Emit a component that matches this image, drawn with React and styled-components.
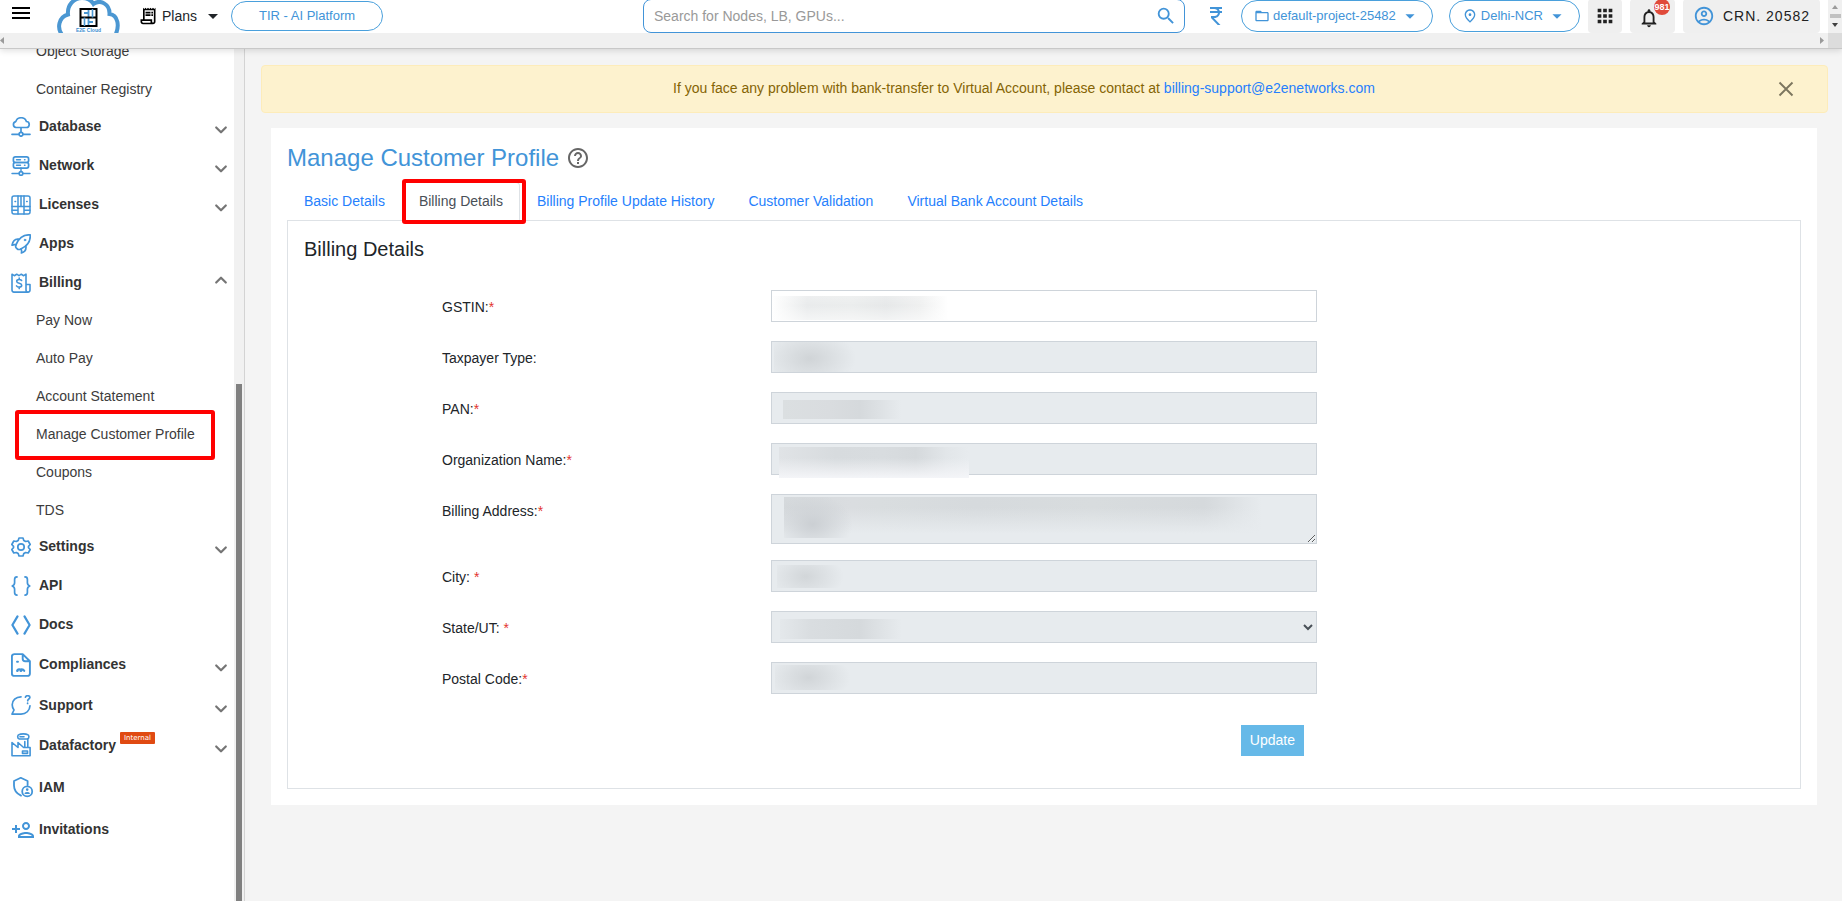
import React, { useState } from 'react';
import styled, { createGlobalStyle } from 'styled-components';
import {
  MdMenu,
  MdOutlineReceiptLong,
  MdArrowDropDown,
  MdSearch,
  MdCurrencyRupee,
  MdFolderOpen,
  MdOutlinePlace,
  MdApps,
  MdNotificationsNone,
  MdOutlineAccountCircle,
  MdHelpOutline,
  MdOutlinePersonAdd,
} from 'react-icons/md';

const blue = '#4294d8';
const link = '#267ffd';

const GlobalStyle = createGlobalStyle`
  * {
    box-sizing: border-box;
  }
  body {
    margin: 0;
    background: #f4f4f4;
    color: #212529;
    font-family: "Liberation Sans", Arial, sans-serif;
    font-size: 14px;
    line-height: 21px;
  }
  button, input, textarea, select {
    font: inherit;
  }
  svg {
    display: block;
    flex: none;
  }
`;

const Page = styled.div`
  display: flex;
  flex-direction: column;
  height: 100vh;
  overflow: hidden;
`;

/* ---------- top bar ---------- */

const TopBar = styled.header`
  position: relative;
  z-index: 1;
  background: #f0f0f0;
  border-bottom: 1px solid #c8c8c8;
  box-shadow: 0 2px 6px rgba(0, 0, 0, 0.12);
`;

const TopRow = styled.div`
  display: flex;
`;

const TopContent = styled.div`
  flex: 1;
  display: flex;
  align-items: center;
  height: 33px;
  padding: 0 8px 1px 9px;
  background: #fff;
  overflow: hidden;
`;

const IconButton = styled.button`
  display: flex;
  align-items: center;
  padding: 0;
  border: 0;
  background: none;
  color: ${(props) => props.$color || '#000'};
`;

const MenuButton = styled(IconButton)`
  margin-bottom: 6px;
`;

const LogoLink = styled.a`
  margin-left: 24px;
  align-self: flex-start;
`;

const PlansButton = styled(IconButton)`
  margin: 0 6px 0 15px;
  color: #212529;

  svg:first-child {
    margin-right: 4px;
    color: #000;
  }
  svg:last-child {
    margin-left: 4px;
  }
`;

const Pill = styled.button`
  display: flex;
  flex: none;
  align-items: center;
  height: ${(props) => props.$height || 32}px;
  padding: ${(props) => props.$padding || '0 11px 1px 12px'};
  border: 1px solid #4aa0dc;
  border-radius: 16px;
  background: #fff;
  color: ${blue};
  font-size: 13px;
  line-height: 20px;
  white-space: nowrap;

  svg:first-child {
    margin-right: 3px;
  }
  svg:last-child {
    margin-left: 3px;
  }
`;

const SearchBox = styled.label`
  display: flex;
  flex: 0 1 542px;
  align-items: center;
  height: 34px;
  margin-left: auto;
  padding: 0 7px 0 10px;
  border: 1px solid ${blue};
  border-radius: 8px;
  color: ${blue};
`;

const SearchInput = styled.input`
  flex: 1;
  min-width: 0;
  padding: 0;
  border: 0;
  outline: 0;
  background: none;

  &::placeholder {
    color: #999;
  }
`;

const TopActions = styled.div`
  display: flex;
  flex: none;
  align-items: center;
  gap: 8px;
  margin-left: 19px;
`;

const PillGroup = styled.div`
  display: flex;
  gap: 16px;
  margin-left: 5px;
`;

const GreyButton = styled.button`
  position: relative;
  display: flex;
  align-items: center;
  justify-content: center;
  gap: 8px;
  height: 34px;
  padding: ${(props) => props.$padding};
  border: 0;
  border-radius: 4px;
  background: #efefef;
  color: #212121;
  letter-spacing: 1px;
  white-space: nowrap;

  svg {
    color: ${(props) => props.$iconColor || '#212121'};
  }
`;

const Count = styled.span`
  position: absolute;
  top: 0;
  right: 5px;
  width: 16px;
  height: 16px;
  border-radius: 8px;
  background: #e04a3a;
  color: #fff;
  font-size: 9px;
  font-weight: bold;
  line-height: 16px;
  letter-spacing: 0;
  text-align: center;
`;

const VerticalBar = styled.div`
  display: flex;
  flex-direction: column;
  align-items: center;
  justify-content: space-between;
  width: 14px;
  padding: 5px 0 6px;
  background: #f0f0f0;
`;

const VerticalThumb = styled.div`
  width: 11px;
  height: 4px;
  background: #c1c1c1;
`;

const HorizontalBar = styled.div`
  display: flex;
  align-items: center;
  justify-content: space-between;
  height: 15px;
`;

const Corner = styled.div`
  width: 14px;
  height: 15px;
  margin-left: 4px;
  background: #dcdcdc;
`;

const RightArrow = styled.div`
  display: flex;
  align-items: center;
`;

/* ---------- side bar ---------- */

const Body = styled.div`
  display: flex;
  flex: 1;
  min-height: 0;
`;

const SideBar = styled.aside`
  display: flex;
  flex: none;
  width: 245px;
  background: #fff;
  border-right: 1px solid #d3d3d3;
  overflow: hidden;
`;

const SideNav = styled.nav`
  flex: 1;
  margin-top: -16px;
`;

const SideTrack = styled.div`
  width: 10px;
  padding: 335px 2px 0;
  background: #f1f1f1;
`;

const SideThumb = styled.div`
  height: 100%;
  background: #808080;
`;

const NavRow = styled.a`
  display: flex;
  align-items: center;
  height: ${(props) => props.$height || 39}px;
  padding: 0 2px 0 11px;
  color: #333;
  font-weight: bold;
  text-decoration: none;
`;

const NavIcon = styled.span`
  width: 28px;
  color: ${blue};
`;

const NavArrow = styled.span`
  margin-left: auto;
  padding-top: ${(props) => (props.$open ? 0 : 7)}px;
  padding-bottom: ${(props) => (props.$open ? 5 : 0)}px;
  color: #757575;
`;

const InternalTag = styled.span`
  align-self: flex-start;
  margin: 7px 0 0 4px;
  padding: 0 4px;
  border-radius: 1px;
  background: #e04a12;
  color: #fff;
  font-family: "DejaVu Sans", sans-serif;
  font-size: 7px;
  line-height: 12px;
  font-weight: normal;
`;

const SubNav = styled.div`
  display: flex;
  flex-direction: column;
  gap: 1px;
  margin-bottom: ${(props) => props.$tail || 0}px;
`;

const SubLink = styled.a`
  position: relative;
  height: 37px;
  padding-left: 36px;
  color: #3c3c3c;
  line-height: 37px;
  text-decoration: none;
`;

const Highlight = styled.span`
  position: absolute;
  inset: ${(props) => props.$inset};
  border: 4px solid #f00;
  border-radius: 3px;
  pointer-events: none;
`;

/* ---------- content ---------- */

const Main = styled.main`
  flex: 1;
  min-width: 0;
  padding: 16px 14px 0 16px;
`;

const Notice = styled.div`
  display: flex;
  align-items: center;
  height: 48px;
  padding: 0 33px;
  border: 1px solid #fdecba;
  border-radius: 4px;
  background: #fdf2ce;
  color: #856404;
`;

const NoticeText = styled.p`
  flex: 1;
  margin: 0;
  padding: 0 25px 1px 0;
  text-align: center;

  a {
    color: ${link};
    text-decoration: none;
  }
`;

const Card = styled.section`
  margin: 15px 11px 0 10px;
  padding: 16px;
  background: #fff;
`;

const TitleRow = styled.div`
  display: flex;
  align-items: center;
  gap: 7px;
  height: 27px;
  color: #666;
`;

const Title = styled.h1`
  margin: 0;
  color: ${blue};
  font-size: 24px;
  font-weight: normal;
  line-height: 29px;
`;

const Tabs = styled.div`
  display: flex;
  margin-top: 11px;
  border-bottom: 1px solid #dee2e6;
`;

const Tab = styled.button`
  position: relative;
  height: 39px;
  margin-bottom: -1px;
  padding: 0 16px;
  border: 1px solid ${(props) => (props.$active ? '#dee2e6' : 'transparent')};
  border-bottom-color: ${(props) => (props.$active ? '#fff' : 'transparent')};
  border-radius: 4px 4px 0 0;
  background: ${(props) => (props.$active ? '#fff' : 'none')};
  color: ${(props) => (props.$active ? '#495057' : link)};
`;

const Pane = styled.div`
  padding: 16px 16px 32px;
  border: 1px solid #dee2e6;
  border-top: 0;
`;

const PaneTitle = styled.h2`
  margin: 0 0 29px;
  font-size: 20px;
  font-weight: normal;
  line-height: 24px;
`;

const Form = styled.form`
  width: 100%;
  max-width: 1013px;
  padding-left: 138px;
`;

const Field = styled.div`
  display: grid;
  grid-template-columns: 329px 1fr;
  margin-bottom: ${(props) => props.$after || 19}px;
`;

const FieldLabel = styled.label`
  padding-top: 7px;
`;

const Required = styled.span`
  color: #e3342f;
`;

const Control = styled.div`
  position: relative;
  display: flex;
`;

const Input = styled.input`
  width: 100%;
  height: 32px;
  padding: 4px 8px;
  border: 1px solid #ced4da;
  border-radius: 0;
  background: ${(props) => (props.disabled ? '#e7ebee' : '#fff')};
  color: #495057;
  opacity: 1;
`;

const TextArea = styled(Input)`
  height: 50px;
  resize: vertical;
`;

const Select = styled(Input)`
  padding: 4px;
`;

/* soft patch that hides a private value */
const Smudge = styled.span`
  position: absolute;
  top: ${(props) => props.$box[0]}px;
  left: ${(props) => props.$box[1]}px;
  width: ${(props) => props.$box[2]}px;
  height: ${(props) => props.$box[3]}px;
  background: ${(props) => props.$fill};
  pointer-events: none;
`;

const FormActions = styled.div`
  display: flex;
  justify-content: flex-end;
  padding: 12px 13px 0 0;
`;

const UpdateButton = styled.button`
  height: 31px;
  padding: 0 9px;
  border: 0;
  background: #66b9e8;
  color: #fff;
`;

/* ---------- drawings ---------- */

const Line = ({ children, size = 20, box = '0 0 20 20', width = 1.7 }) => (
  <svg
    width={size}
    height={size}
    viewBox={box}
    fill="none"
    stroke="currentColor"
    strokeWidth={width}
    strokeLinecap="round"
    strokeLinejoin="round"
  >
    {children}
  </svg>
);

const Chevron = ({ up }) => (
  <Line size={22} box="0 0 22 22" width={2.2}>
    <path d={up ? 'M6.200 13.500 11 8.700l4.800 4.800' : 'M6.200 8.500 11 13.300l4.800-4.800'} />
  </Line>
);

const DatabaseIcon = () => (
  <Line>
    <path d="M5 10.5h10a3 3 0 0 0 .4-6A5.6 5.6 0 0 0 4.8 4.6 3 3 0 0 0 5 10.5zM10 10.5V15M1 17.3h7M12 17.3h7" />
    <circle cx="10" cy="17.3" r="1.9" />
  </Line>
);

const NetworkIcon = () => (
  <Line>
    <rect x="2.4" y="0.9" width="15.2" height="5.6" rx="2" />
    <rect x="2.4" y="6.5" width="15.2" height="5.6" rx="2" />
    <path d="M5.5 3.7h4M13.5 3.7h.5M5.5 9.3h4M13.5 9.3h.5M10 12v3.3M1 17.5h7M12 17.5h7" strokeWidth="1.4" />
    <circle cx="10" cy="17.5" r="1.8" />
  </Line>
);

const LicensesIcon = () => (
  <Line width={1.5}>
    <rect x="1" y="1" width="18" height="18" rx="2" />
    <path d="M7 1v18M13 1v18M1 11.5h18M1 15.2h6M13 15.2h6M4 6.6h.6M15.6 6.6h.6M10 1v10" />
  </Line>
);

const RocketIcon = () => (
  <Line>
    <path d="M19.2.9c-6-.5-11 2.3-14 9.4-.8 1.7-.9 2.6 0 3.6l1 1c.9.9 2 .8 3.6 0 7-3.2 9.9-7.8 9.4-14z" />
    <path d="M7.6 5.2C4.6 4.8 2 6.6 1 11.2c1.4-.7 2.7-.8 4-.5M14.9 12.4c.4 3-1.4 5.6-4.5 6.6.4-1.4.3-2.7-.4-4" />
    <circle cx="14" cy="6" r="0.9" fill="currentColor" strokeWidth="0.6" />
  </Line>
);

const BillingIcon = () => (
  <Line width={1.6}>
    <path d="M15 19.1H3a2 2 0 0 1-2-2V1.2l2.3 1.5 2.400-1.5L8 2.7l2.3-1.5 2.4 1.5L15 1.2v15.9a2 2 0 0 0 4 0V11.5h-4M15 19.1h2" />
    <path d="M10.6 7.5C10 6.7 9 6.5 8.1 6.5c-1.4 0-2.4.7-2.4 1.8 0 2.7 5 1.2 5 3.9 0 1.2-1.1 1.9-2.5 1.9-1.1 0-2.1-.3-2.7-1.2M8.2 5v1.5M8.2 14.1v1.5" />
  </Line>
);

const GearIcon = () => (
  <Line>
    <path d="M8 1h4l.8 2.4 1.9 1.1 2.5-.5 2 3.5-1.7 1.8v1.4l1.7 1.8-2 3.5-2.5-.5-1.9 1.1L12 19H8l-.8-2.4-1.9-1.1-2.5.5-2-3.5 1.7-1.8V9.3L.8 7.5l2-3.5 2.5.5 1.9-1.1z" />
    <circle cx="10" cy="10" r="3.2" />
  </Line>
);

const BracesIcon = () => (
  <Line>
    <path d="M6 .9C3.9.9 3.600 2 3.6 3.5v3.3c0 1.7-.8 2.6-2.4 3.2 1.6.6 2.4 1.5 2.4 3.2v3.3c0 1.5.3 2.6 2.4 2.6M14 .9c2.1 0 2.4 1.1 2.4 2.6v3.3c0 1.7.8 2.6 2.4 3.2-1.6.6-2.4 1.5-2.4 3.2v3.3c0 1.5-.3 2.6-2.4 2.6" />
  </Line>
);

const DocsIcon = () => (
  <Line width={2.2}>
    <path d="M6.5 1.4 1.4 10l5.1 8.6M13.5 1.4l5.1 8.6-5.1 8.6" />
  </Line>
);

const ComplianceIcon = () => (
  <Line size={24} box="0 0 24 24" width={1.9}>
    <path d="M11.7 1.1H3.4A2.5 2.5 0 0 0 .9 3.6v16.8a2.5 2.5 0 0 0 2.5 2.5h13a2.5 2.5 0 0 0 2.5-2.5V8.2zM11.7 1.1v4.6a2.5 2.5 0 0 0 2.5 2.5h4.7M6 8.7h1" />
    <path d="M6.2 17.400c.8-.9 2-1.2 3.2-.8 1.4-.4 3.2.2 3.8 1.2M6.2 18h.3M9.5 17.8h.8" strokeWidth="2.2" />
  </Line>
);

const SupportIcon = () => (
  <Line>
    <path d="M10 1.8C4.8 1.8 1.2 5.3 1.2 9.8c0 2 .6 3.6 1.8 5.2l-2 4.1h9c5 0 8.8-3.5 9-8.3" />
    <path d="M14.4 2.2c.3-1 1.1-1.5 2.2-1.5 1.3 0 2.3.7 2.3 1.8 0 1.5-2.2 1.5-2.2 3.2M16.6 8.2v.2" />
  </Line>
);

const FactoryIcon = () => (
  <Line size={24} box="0 0 24 24" width={1.6}>
    <path d="M1 22.8V9.5l6 5V9.5l5.6 5h6.5v8.3zM13.8 14V8.5M16.8 14V6M11.5 18h5v2.4h-5z" />
    <path d="M8.3 6a2.3 2.3 0 0 1 0-4.4c1-1 7-1 8 0a2.3 2.3 0 0 1 0 4.4zM9 3.8h4" />
  </Line>
);

const ShieldIcon = () => (
  <Line size={24} box="0 -1 24 24" width={1.8}>
    <path d="M10 19.6C5.5 17.5 3 14 3 9.5V5l6.800-3.2L16.6 5v4" />
    <circle cx="16.2" cy="15.4" r="5" />
    <circle cx="16.2" cy="13.6" r="0.7" strokeWidth="1.3" />
    <path d="M14.2 17.4c.6-1 3.4-1 4 0z" strokeWidth="1.3" />
  </Line>
);

const CloseIcon = () => (
  <svg width="16" height="16" viewBox="0 0 16 16" stroke="#7c765f" strokeWidth="1.9">
    <path d="M1.5 1.5l13 13M14.5 1.5l-13 13" />
  </svg>
);

const Logo = () => (
  <svg width="66" height="33" viewBox="0 0 66 33" fill="none">
    <path
      d="M6 36C-1 28 2 17 11 14.5 10 5 17-2 25-2c6 0 9 2 11.5 6C43-1 53 4 52.5 14 61 15 63 26 58 36"
      stroke="#4b97d2"
      strokeWidth="4"
    />
    <path d="M31.5 9v17M27 13h4.5M31.5 22h4.5" stroke="#4b97d2" strokeWidth="1.8" />
    <path d="M23.5 9h16v17h-16zM23.5 17.5h16" stroke="#000" strokeWidth="2" />
    <path d="M35.5 9v8.5M27.5 17.5V26" stroke="#4b97d2" strokeWidth="1.6" />
    <text x="31.5" y="32" fill="#3c8fd0" fontSize="5" fontWeight="bold" textAnchor="middle">
      E2E Cloud
    </text>
  </svg>
);

const Arrow = ({ points, fill = '#9a9a9a', size = '8 5' }) => {
  const [width, height] = size.split(' ');
  return (
    <svg width={width} height={height}>
      <polygon points={points} fill={fill} />
    </svg>
  );
};

/* ---------- data ---------- */

const menu = [
  { label: 'Database', icon: <DatabaseIcon />, arrow: true },
  { label: 'Network', icon: <NetworkIcon />, arrow: true },
  { label: 'Licenses', icon: <LicensesIcon />, arrow: true },
  { label: 'Apps', icon: <RocketIcon /> },
  {
    label: 'Billing',
    icon: <BillingIcon />,
    arrow: true,
    items: ['Pay Now', 'Auto Pay', 'Account Statement', 'Manage Customer Profile', 'Coupons', 'TDS'],
  },
  { label: 'Settings', icon: <GearIcon />, arrow: true },
  { label: 'API', icon: <BracesIcon /> },
  { label: 'Docs', icon: <DocsIcon /> },
  { label: 'Compliances', icon: <ComplianceIcon />, arrow: true, height: 41 },
  { label: 'Support', icon: <SupportIcon />, arrow: true, height: 40 },
  { label: 'Datafactory', icon: <FactoryIcon />, arrow: true, tag: 'Internal', height: 40 },
  { label: 'IAM', icon: <ShieldIcon />, height: 44 },
  { label: 'Invitations', icon: <MdOutlinePersonAdd size={24} />, height: 41 },
];

const tabs = [
  'Basic Details',
  'Billing Details',
  'Billing Profile Update History',
  'Customer Validation',
  'Virtual Bank Account Details',
];

const spot = (at, size, color) =>
  `radial-gradient(ellipse ${size} at ${at}, ${color}, transparent)`;

const fields = [
  {
    id: 'gstin',
    label: 'GSTIN:',
    required: true,
    enabled: true,
    box: [6, 1, 176, 24],
    fill: 'linear-gradient(180deg, rgba(255, 255, 255, 0.2), transparent 40%, rgba(255, 255, 255, 0.5)), linear-gradient(90deg, #fff, #e9ebec 20%, #ebeded 45%, #e6e8e9 65%, #eff0f0 84%, #fff)',
  },
  {
    id: 'taxpayer',
    label: 'Taxpayer Type:',
    box: [1, 3, 90, 30],
    fill: spot('40% 55%', '46px 28px', '#d0d4d7'),
  },
  {
    id: 'pan',
    label: 'PAN:',
    required: true,
    box: [8, 12, 118, 19],
    fill: 'linear-gradient(90deg, #dbdfe1, #d9dcdf 40%, #d5d9dc 65%, #dde1e4 82%, #e7ebee)',
  },
  {
    id: 'org',
    label: 'Organization Name:',
    required: true,
    box: [4, 8, 190, 31],
    fill: `linear-gradient(180deg, transparent 35%, #f4f5f8), linear-gradient(90deg, #e0e3e6, #d7dbde 30%, #d8dcdf 55%, #d5d9dc 72%, #e2e6e9 88%, #e7ebee)`,
  },
  {
    id: 'address',
    label: 'Billing Address:',
    required: true,
    type: 'textarea',
    after: 16,
    box: [3, 13, 478, 41],
    fill: `${spot('6% 66%', '40px 30px', '#cbcfd3')}, linear-gradient(180deg, transparent 25%, #e7ebee 90%), linear-gradient(90deg, #d5d9dc, #dadde0 14%, #d9dddf 20%, #d6dadd 40%, #d8dcde 65%, #d5d9dc 88%, #e7ebee)`,
  },
  {
    id: 'city',
    label: 'City: ',
    required: true,
    box: [5, 6, 80, 23],
    fill: `${spot('36% 50%', '38px 24px', '#d2d6d9')}`,
  },
  {
    id: 'state',
    label: 'State/UT: ',
    required: true,
    type: 'select',
    box: [8, 9, 122, 20],
    fill: 'linear-gradient(90deg, #e4e8eb, #d9dde0 25%, #d5d9dc 65%, #e0e4e7 86%, #e7ebee)',
  },
  {
    id: 'postal',
    label: 'Postal Code:',
    required: true,
    box: [3, 4, 86, 25],
    fill: `${spot('39% 50%', '42px 26px', '#d1d5d8')}`,
  },
];

const controls = { textarea: TextArea, select: Select };

const FormField = ({ field }) => {
  const Widget = controls[field.type] || Input;
  return (
    <Field $after={field.after}>
      <FieldLabel htmlFor={field.id}>
        {field.label}
        {field.required && <Required>*</Required>}
      </FieldLabel>
      <Control>
        <Widget as={field.type} id={field.id} disabled={!field.enabled} />
        <Smudge $box={field.box} $fill={field.fill} />
      </Control>
    </Field>
  );
};

const Header = () => (
  <TopBar>
    <TopRow>
      <TopContent>
        <MenuButton aria-label="Menu">
          <MdMenu size={24} />
        </MenuButton>
        <LogoLink href="#" aria-label="Home">
          <Logo />
        </LogoLink>
        <PlansButton>
          <MdOutlineReceiptLong size={20} />
          Plans
          <MdArrowDropDown size={24} />
        </PlansButton>
        <Pill $height={30} $padding="0 27px">TIR - AI Platform</Pill>
        <SearchBox>
          <SearchInput aria-label="Search" placeholder="Search for Nodes, LB, GPUs..." />
          <MdSearch size={22} />
        </SearchBox>
        <TopActions>
          <IconButton $color={blue} aria-label="Balance">
            <MdCurrencyRupee size={24} />
          </IconButton>
          <PillGroup>
            <Pill>
              <MdFolderOpen size={16} />
              default-project-25482
              <MdArrowDropDown size={22} />
            </Pill>
            <Pill>
              <MdOutlinePlace size={16} />
              Delhi-NCR
              <MdArrowDropDown size={22} />
            </Pill>
          </PillGroup>
          <GreyButton $padding="0 6px" aria-label="Apps">
            <MdApps size={22} />
          </GreyButton>
          <GreyButton $padding="4px 15px 0 8px" aria-label="Notifications">
            <MdNotificationsNone size={22} />
            <Count>981</Count>
          </GreyButton>
          <GreyButton $padding="0 10px" $iconColor={blue}>
            <MdOutlineAccountCircle size={22} />
            CRN. 20582
          </GreyButton>
        </TopActions>
      </TopContent>
      <VerticalBar>
        <Arrow points="0,4 6,4 3,0" size="6 4" />
        <VerticalThumb />
        <Arrow points="0,0 6,0 3,4" size="6 4" fill="#404040" />
      </VerticalBar>
    </TopRow>
    <HorizontalBar>
      <Arrow points="4,0 4,7 0,3.5" size="4 7" />
      <RightArrow>
        <Arrow points="0,0 0,7 4,3.5" size="4 7" />
        <Corner />
      </RightArrow>
    </HorizontalBar>
  </TopBar>
);

const SideMenu = () => (
  <SideBar>
    <SideNav>
      <SubNav $tail={-1}>
        <SubLink href="#">Object Storage</SubLink>
        <SubLink href="#">Container Registry</SubLink>
      </SubNav>
      {menu.map((entry) => (
        <React.Fragment key={entry.label}>
          <NavRow href="#" $height={entry.height}>
            <NavIcon>{entry.icon}</NavIcon>
            {entry.label}
            {entry.tag && <InternalTag>{entry.tag}</InternalTag>}
            {entry.arrow && (
              <NavArrow $open={!!entry.items}>
                <Chevron up={!!entry.items} />
              </NavArrow>
            )}
          </NavRow>
          {entry.items && (
            <SubNav $tail={-2}>
              {entry.items.map((item) => (
                <SubLink href="#" key={item}>
                  {item}
                  {item === 'Manage Customer Profile' && <Highlight $inset="-6px 19px -7px 15px" />}
                </SubLink>
              ))}
            </SubNav>
          )}
        </React.Fragment>
      ))}
    </SideNav>
    <SideTrack>
      <SideThumb />
    </SideTrack>
  </SideBar>
);

const App = () => {
  const [activeTab, setActiveTab] = useState('Billing Details');
  const [showNotice, setShowNotice] = useState(true);

  return (
    <>
      <GlobalStyle />
      <Page>
        <Header />
        <Body>
          <SideMenu />
          <Main>
            {showNotice && (
              <Notice>
                <NoticeText>
                  If you face any problem with bank-transfer to Virtual Account, please contact at{' '}
                  <a href="mailto:billing-support@e2enetworks.com">billing-support@e2enetworks.com</a>
                </NoticeText>
                <IconButton aria-label="Close" onClick={() => setShowNotice(false)}>
                  <CloseIcon />
                </IconButton>
              </Notice>
            )}
            <Card>
              <TitleRow>
                <Title>Manage Customer Profile</Title>
                <MdHelpOutline size={24} />
              </TitleRow>
              <Tabs role="tablist">
                {tabs.map((tab) => (
                  <Tab
                    key={tab}
                    role="tab"
                    aria-selected={tab === activeTab}
                    $active={tab === activeTab}
                    onClick={() => setActiveTab(tab)}
                  >
                    {tab}
                    {tab === 'Billing Details' && <Highlight $inset="-4px -7px -4px -1px" />}
                  </Tab>
                ))}
              </Tabs>
              <Pane>
                <PaneTitle>Billing Details</PaneTitle>
                <Form onSubmit={(e) => e.preventDefault()}>
                  {fields.map((field) => (
                    <FormField key={field.id} field={field} />
                  ))}
                  <FormActions>
                    <UpdateButton type="submit">Update</UpdateButton>
                  </FormActions>
                </Form>
              </Pane>
            </Card>
          </Main>
        </Body>
      </Page>
    </>
  );
};

export default App;
